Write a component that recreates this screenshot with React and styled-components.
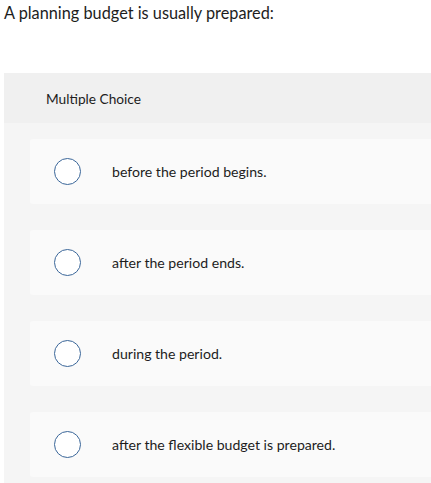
import React from 'react';
import styled, { createGlobalStyle } from 'styled-components';

const GlobalStyle = createGlobalStyle`
    html, body {
        margin: 0;
        padding: 0;
        background: #ffffff;
        font-family: "Lato", "Noto Sans", sans-serif;
        color: #1a1a1a;
        overflow: hidden;
    }
`;

const Page = styled.div`
    width: 431px;
    height: 483px;
    overflow: hidden;
`;

const Prompt = styled.p`
    margin: 0;
    padding: 3px 0 0 4px;
    font-size: 16.3px;
    line-height: 20px;
    color: #1d1d1d;
`;

const Panel = styled.section`
    margin: 50px -20px 0 4px;
    background: #f5f5f5;
`;

const PanelHeader = styled.div`
    height: 50px;
    background: #f0f0f0;
    display: flex;
    align-items: center;
    padding-left: 42px;
    font-size: 13.7px;
    color: #1d1d1d;
`;

const Choices = styled.div`
    display: flex;
    flex-direction: column;
    gap: 26px;
    padding: 16px 0 6px 26px;
`;

const Choice = styled.label`
    height: 65px;
    background: #fafafa;
    border-radius: 3px;
    display: flex;
    align-items: center;
    padding-left: 24px;
    cursor: pointer;
`;

const Radio = styled.span`
    width: 25px;
    height: 25px;
    border: 1.5px solid #3a6699;
    border-radius: 50%;
    background: #ffffff;
    flex-shrink: 0;
`;

const ChoiceText = styled.span`
    margin-left: 31px;
    font-size: 14.1px;
    color: #1d1d1d;
`;

const options = [
    'before the period begins.',
    'after the period ends.',
    'during the period.',
    'after the flexible budget is prepared.',
];

const App = () => {
    return (
        <Page>
            <GlobalStyle />
            <Prompt>A planning budget is usually prepared:</Prompt>
            <Panel>
                <PanelHeader>Multiple Choice</PanelHeader>
                <Choices>
                    {options.map((text) => (
                        <Choice key={text}>
                            <Radio />
                            <ChoiceText>{text}</ChoiceText>
                        </Choice>
                    ))}
                </Choices>
            </Panel>
        </Page>
    );
};

export default App;
